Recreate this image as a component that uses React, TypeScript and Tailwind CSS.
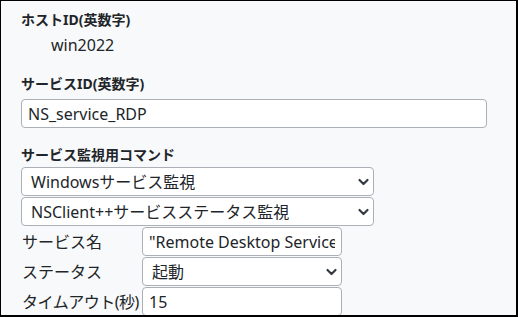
import React from "react";

const Chevron = () => (
  <svg
    className="pointer-events-none absolute right-[4px] top-1/2 -translate-y-1/2"
    width="11"
    height="8"
    viewBox="0 0 16 12"
  >
    <path d="m2 3 6 6 6-6" fill="none" stroke="#343a40" strokeWidth="3.2" strokeLinecap="round" strokeLinejoin="round" />
  </svg>
);

const Select = ({ value, w }: { value: string; w: string }) => (
  <div className={`relative h-[29px] ${w} shrink-0 rounded-[4px] border border-[#aab0b6] bg-white`}>
    <div className="flex h-full items-center pl-[9px] text-[16px] leading-none text-[#212529] whitespace-nowrap overflow-hidden">
      {value}
    </div>
    <Chevron />
  </div>
);

const Input = ({ value, w }: { value: string; w: string }) => (
  <div className={`h-[29px] ${w} shrink-0 rounded-[4px] border border-[#aab0b6] bg-white px-[6px]`}>
    <div className="flex h-full items-center overflow-hidden text-[16px] leading-none text-[#212529] whitespace-nowrap">
      {value}
    </div>
  </div>
);

export default function App() {
  return (
    <div
      className="w-[518px] h-[317px] overflow-hidden border-l border-t border-r-2 border-b-2 border-black bg-[#f8f9fa] text-[#212529]"
      style={{ fontFamily: '"Noto Sans", "Noto Sans CJK JP", sans-serif' }}
    >
      <div className="flex flex-col pl-[20px] pt-[9px]">
        <div className="h-[20px] text-[14px] font-bold leading-[20px]">ホストID(英数字)</div>
        <div className="mt-[4px] h-[22px] pl-[30px] text-[16px] leading-[22px]">win2022</div>
        <div className="mt-[18px] h-[20px] text-[14px] font-bold leading-[20px]">サービスID(英数字)</div>
        <div className="mt-[5px]">
          <Input value="NS_service_RDP" w="w-[466px]" />
        </div>
        <div className="mt-[17px] h-[20px] text-[14px] font-bold leading-[20px]">サービス監視用コマンド</div>
        <div className="mt-[2px] flex flex-col gap-[1px]">
          <Select value="Windowsサービス監視" w="w-[353px]" />
          <Select value="NSClient++サービスステータス監視" w="w-[353px]" />
          <div className="flex items-center">
            <div className="w-[121px] shrink-0 pl-[1px] text-[16px] leading-none whitespace-nowrap">サービス名</div>
            <Input value={'"Remote Desktop Services"'} w="w-[200px]" />
          </div>
          <div className="flex items-center">
            <div className="w-[121px] shrink-0 pl-[1px] text-[16px] leading-none whitespace-nowrap">ステータス</div>
            <Select value="起動" w="w-[200px]" />
          </div>
          <div className="flex items-center">
            <div className="w-[121px] shrink-0 pl-[1px] text-[16px] leading-none whitespace-nowrap tracking-[-0.5px]">タイムアウト(秒)</div>
            <Input value="15" w="w-[200px]" />
          </div>
        </div>
      </div>
    </div>
  );
}
